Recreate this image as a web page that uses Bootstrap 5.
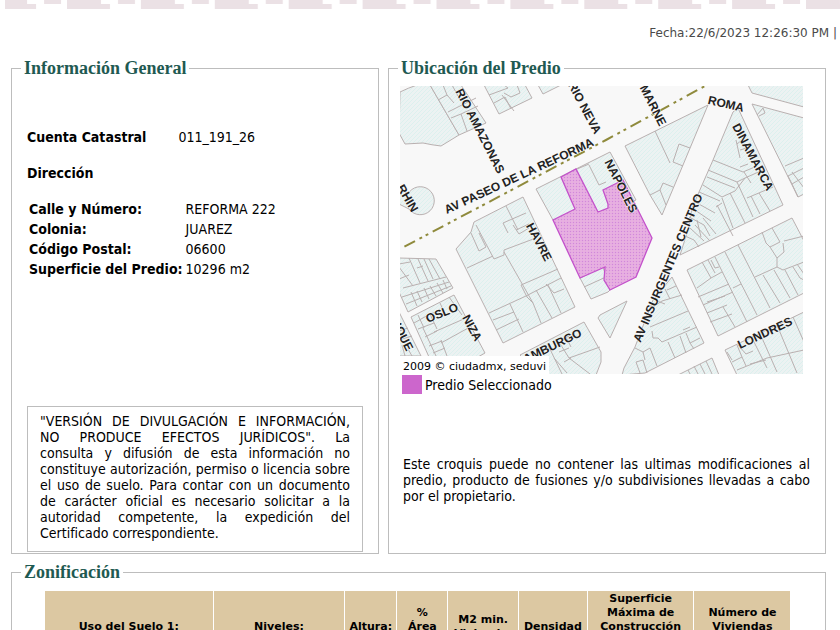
<!DOCTYPE html>
<html lang="es">
<head>
<meta charset="utf-8">
<meta name="viewport" content="width=device-width, initial-scale=1">
<title>Información del Predio</title>
<link href="https://cdn.jsdelivr.net/npm/bootstrap@5.3.0/dist/css/bootstrap.min.css" rel="stylesheet">
<style>
  body { font-family: "DejaVu Sans Condensed", "DejaVu Sans", sans-serif; font-size: 14px; line-height: 16px; color: #000; background: #fff; }
  .greca { height: 10px; padding-left: 5px; }
  .fecha { font-family: "DejaVu Sans", sans-serif; font-size: 12px; color: #4a4a4a; padding: 15px 3px 17px; }
  .pagina { padding: 0 14px 0 11px; }
  .paneles { display: grid; grid-template-columns: 368fr 438fr; gap: 9px; }
  .panel { border: 1px solid #bdbdbd; padding: 0 11px; margin: 0; }
  .panel legend { font-family: "Liberation Serif", serif; font-weight: 700; font-size: 18px; line-height: 20px; color: #1f5a52; padding: 0 3px; margin: 0 0 0 -2px; }
  .general { min-height: 475px; padding: 0 4px 1px; }
  .datos { margin-top: 18px; }
  .datos td, .datos th { padding: 2px 1px 2px 2px; line-height: 16px; }
  .aviso { border: 1px solid #bdbdbd; padding: 6px 12px 10px; text-align: justify; }
  .cuenta { margin-top: 51px; gap: 32px; }
  .domicilio { margin-top: 20px; }
  .mapa { width: 403px; max-width: 100%; height: auto; margin-top: 8px; }
  .leyenda { margin: 1px 0 0 2px; gap: 3px; }
  .muestra { width: 20px; height: 19px; background: #cc66cc; }
  .croquis { text-align: justify; margin: 62px 4px 0 3px; }
  .zona { margin-top: 8px; }
  .zona-tabla { font-family: "DejaVu Sans", sans-serif; font-size: 11px; line-height: 14px; border-collapse: separate; border-spacing: 1px 0; width: 94.5%; margin: 9px 0 20px 21px; table-layout: fixed; }
  .zona-tabla th { background: #dcc8a2; padding: 0 1px 1px; text-align: center; vertical-align: middle; height: 73px; }
  .calle { font-family: "Liberation Sans", Arial, sans-serif; font-size: 12px; fill: #222; stroke: #f8f8f8; stroke-width: 1px; paint-order: stroke; font-weight: 700; }
  .autor { font-family: "DejaVu Sans", sans-serif; font-size: 11px; }
</style>
<script src="https://cdn.jsdelivr.net/npm/bootstrap@5.3.0/dist/js/bootstrap.bundle.min.js"></script>
</head>
<body>
<header>
  <div class="greca">
    <svg class="d-block" width="100%" height="10" aria-hidden="true">
      <defs><pattern id="greca" x="62" width="73.9" height="10" patternUnits="userSpaceOnUse">
        <path fill="#ebe1e5" d="M0 0h34v4h9v5H0zM51 0h17v4H51z"/>
      </pattern></defs>
      <rect width="100%" height="10" fill="url(#greca)"/>
    </svg>
  </div>
  <div class="fecha text-end">Fecha:22/6/2023 12:26:30 PM |</div>
</header>
<main class="pagina">
  <div class="paneles">
    <fieldset class="panel">
      <legend class="float-none w-auto">Información General</legend>
      <div class="general d-flex flex-column">
        <div class="cuenta d-flex"><strong>Cuenta Catastral</strong><span>011_191_26</span></div>
        <strong class="domicilio d-block">Dirección</strong>
        <table class="datos align-self-start">
          <tr><th scope="row">Calle y Número:</th><td>REFORMA 222</td></tr>
          <tr><th scope="row">Colonia:</th><td>JUAREZ</td></tr>
          <tr><th scope="row">Código Postal:</th><td>06600</td></tr>
          <tr><th scope="row">Superficie del Predio:</th><td>10296 m2</td></tr>
        </table>
        <div class="aviso mt-auto">"VERSIÓN DE DIVULGACIÓN E INFORMACIÓN, NO&nbsp;PRODUCE EFECTOS JURÍDICOS". La consulta&nbsp;y&nbsp;difusión de esta información no constituye autorización, permiso o licencia sobre el&nbsp;uso&nbsp;de suelo. Para contar con un documento de&nbsp;carácter oficial es necesario solicitar a la autoridad competente, la expedición del Certificado correspondiente.</div>
      </div>
    </fieldset>
    <fieldset class="panel">
      <legend class="float-none w-auto">Ubicación del Predio</legend>
      <svg class="mapa d-block" viewBox="400 86 403 288" role="img" aria-label="Croquis de ubicación del predio">
        <defs>
          <pattern id="trama" width="4" height="4" patternUnits="userSpaceOnUse"><rect width="4" height="4" fill="#ecf2f2"/><path d="M-1 1l2-2M0 4l4-4M3 5l2-2" stroke="#dcf0ee" stroke-width="1"/></pattern>
          <pattern id="rosa" width="3" height="3" patternUnits="userSpaceOnUse"><rect width="3" height="3" fill="#e6a9e3"/><path d="M0 0h1v1h-1z" fill="#cf8cd6"/><path d="M1 2h2" stroke="#e9b9dc"/></pattern>
        </defs>
        <rect x="400" y="86" width="403" height="288" fill="#f8f8f8"/>
        <g fill="url(#trama)" stroke="#b9b0b0" stroke-width="1" stroke-linejoin="round">
          <path d="M400 92Q408 88 417 85H430L459 135 441 146Q432 145 423 143L405 144 399 133z"/>
          <path d="M430 85H461L486 123 459 135z"/>
          <path d="M484 85L499 114 532 98 525 85z"/>
          <path d="M538 85L543 94 561 85z"/>
          <path d="M399 187L408 194A14 14 0 1 1 409 209L399 204z"/>
          <path d="M536 189L610 152 636 200 602 214 553 220z"/>
          <path d="M580 278L603 267 610 290 608 292 591 299z"/>
          <path d="M474 222L523 197 575 307 503 343 456 249 471 232z"/>
          <path d="M399 258L436 259 453 288 408 312 399 292z"/>
          <path d="M411 317L454 295 485 353 478 357H429z"/>
          <path d="M399 312L421 356H399z"/>
          <path d="M520 355L584 322 601 352 601 362 596 375H540z"/>
          <path d="M598 318L600 315 627 301 610 338z"/>
          <path d="M672 277L704 343 645 373 622 375 624 368 635 347 643 326 653 300z"/>
          <path d="M687 270L792 218 804 241V293L718 336z"/>
          <path d="M725 350L804 312V375H737z"/>
          <path d="M678 375L712 358 719 375z"/>
          <path d="M733 112L738 108 783 205 680 255 688 230 692 208 713 160z"/>
          <path d="M625 146L708 105 683 165 662 215 650 195z"/>
          <path d="M748 85L752 93 804 107V85z"/>
          <path d="M752 104L804 118V194L798 197z"/>
        </g>
        <g fill="none" stroke="#b9b0b0" stroke-width="1">
          <path d="M448 112L476 98M451 118L461 114 467 131M461 114L478 106M438 100L447 95 443 85M447 95L454 103M452 85L458 96"/>
          <path d="M489 95L508 88 504 85M494 103L505 97M502 95L514 111M504 93L511 97 520 93 517 85M505 97L511 109"/>
          <path d="M589 165L599 185 606 182M577 169L589 164"/>
          <path d="M584 287L606 277M506 206L518 230M503 223L526 213M503 223L508 233M516 230L529 224M476 225L494 259 504 255 504 250 536 238M504 252L533 303 541 323M467 268L493 256M489 313L526 296 561 278M521 285L558 269M521 285L527 297M510 304L523 332M493 320L514 312M496 330L519 319M536 290L552 318M548 285L561 313M554 293L564 289M546 284L554 293M471 233L479 251 486 247 479 233M513 225L519 234 529 228M533 303L527 297"/>
          <path d="M409 258L420 283M418 259L428 281M424 259L433 279M429 259L440 279M399 267L413 286M399 279L409 275M403 288L446 277M402 297L449 282M406 304L451 286M411 292L417 306M417 291L422 302M424 288L429 299M430 286L436 296M437 283L443 293M443 280L447 289M417 268L423 266M410 262L399 264"/>
          <path d="M434 332L466 318M441 343L470 327M437 329L430 314M418 315L424 328M414 323L430 314 436 312M418 329L434 323M425 337L437 331M429 346L442 341M433 353L445 348M449 297L462 315M440 303L446 316M441 340L447 356M423 328L436 356M466 318L471 327M399 340L412 336M402 345L405 356M408 349L412 356M399 331L408 328"/>
          <path d="M548 345L562 374M559 342L569 358 600 347M563 339L575 333M566 337L571 347M569 358L590 374M554 358L567 373M559 352L569 348M571 358L564 362"/>
          <path d="M665 289L670 299M667 290L676 286M662 301L682 295M653 307L662 301M650 327L688 311M652 331L653 338 658 338 662 342 697 327M668 342L675 358M680 336L686 353M686 333L690 343 700 338M683 330L690 327M690 343L694 349M635 348L643 352 650 348 657 366M643 352L645 360M636 362L643 360 647 373M636 362L640 373M657 301L665 304"/>
          <path d="M715 257L747 322M725 252L757 315M738 245L770 308M763 275L780 303M774 270L790 298M702 262L711 278 722 272M708 260L715 273M697 288L711 278M711 260L715 268 719 267M698 297L729 284M703 305L733 292M707 313L727 305M710 322L732 314M707 302L725 296M723 307L735 327M755 277L777 267M770 247L777 258 777 267 783 270 804 262M762 232L766 243 770 247 780 242 772 228M783 243L784 252 777 258M784 241L804 236M785 270L798 295M793 267L800 278 804 280M797 264L804 274M733 288L741 284"/>
          <path d="M732 362L742 357 746 366M737 370L767 358 804 350M752 338L767 368M762 338L777 372M777 325L797 373M793 317L804 342M738 345L746 354 753 351M742 357L737 345M732 360L727 352M750 364L766 360M688 370L690 374M694 366L698 374M700 364L705 374M706 361L712 374"/>
          <path d="M713 160L743 172M708 170L737 182M707 177L735 188M703 185L722 197M699 192L720 201M697 203L715 213M692 208L711 221M689 217L704 225M722 197L735 191 745 178 737 182M722 198L733 228M730 193L745 223M737 182L753 217M747 198L773 187M751 196L760 214M759 193L770 211M744 172L751 183M717 205L733 236M716 207L722 203M704 225L710 236M697 220L701 237M685 236L694 240 699 247M690 228L704 241M695 225L710 241M736 140L740 158M742 140L737 144M740 150L747 148M740 167L748 164M743 172L757 166M745 178L763 170M703 218L716 234"/>
          <path d="M655 131L670 163M690 148L679 144 673 162 683 166M650 195L660 190 666 205M660 190L663 183 673 187M785 166L804 158M788 176L804 168M792 184L804 177M788 176L792 184 798 197M792 172L804 188M763 108L765 113 759 116M757 115L763 108"/>
        </g>
        <path fill="url(#rosa)" stroke="#c352cb" stroke-width="1.3" d="M561 177L576 169 598 212 608 208 608 204 603 190 623 180 648 230 652 238 636 277 610 290 604 280 605 267 580 278 553 220 575 209z"/>
        <path fill="none" stroke="#8f8a3c" stroke-width="2" stroke-dasharray="12 5 3 4 3 5" stroke-dashoffset="27" d="M400 249L606 140 705 86"/>
        <g class="calle">
          <text text-anchor="middle" transform="translate(480 131) rotate(63)" dy="4">RIO AMAZONAS</text>
          <text text-anchor="end" transform="translate(598 133) rotate(62)" dy="4">RIO NEVA</text>
          <text text-anchor="end" transform="translate(663 125) rotate(63)" dy="4">MARNE</text>
          <text text-anchor="middle" transform="translate(519 176) rotate(-25)" dy="4">AV PASEO DE LA REFORMA</text>
          <text text-anchor="end" transform="translate(415 211) rotate(60)" dy="4">RHIN</text>
          <text text-anchor="middle" transform="translate(539 242) rotate(62)" dy="4">HAVRE</text>
          <text text-anchor="middle" transform="translate(621 186) rotate(63)" dy="4">NAPOLES</text>
          <text text-anchor="middle" transform="translate(726 104) rotate(13)" dy="4">ROMA</text>
          <text text-anchor="middle" transform="translate(753 157) rotate(62)" dy="4">DINAMARCA</text>
          <text text-anchor="middle" transform="translate(668 268) rotate(-67)" dy="4">AV INSURGENTES CENTRO</text>
          <text text-anchor="middle" transform="translate(765 333) rotate(-25)" dy="4">LONDRES</text>
          <text text-anchor="end" transform="translate(581 332) rotate(-26)" dy="4">HAMBURGO</text>
          <text text-anchor="middle" transform="translate(442 313) rotate(-22)" dy="4">OSLO</text>
          <text text-anchor="middle" transform="translate(472 328) rotate(62)" dy="4">NIZA</text>
          <text text-anchor="end" transform="translate(410 350) rotate(63)" dy="4">DUQUE</text>
        </g>
        <rect x="400" y="356" width="149" height="18" fill="#fff"/>
        <text class="autor" x="403" y="370">2009 © ciudadmx, seduvi</text>
      </svg>
      <div class="leyenda d-flex align-items-center"><span class="muestra"></span><span>Predio Seleccionado</span></div>
      <p class="croquis">Este croquis puede no contener las ultimas modificaciones al predio, producto de fusiones y/o subdivisiones llevadas a cabo por el propietario.</p>
    </fieldset>
  </div>
  <fieldset class="panel zona">
    <legend class="float-none w-auto">Zonificación</legend>
    <table class="zona-tabla">
      <colgroup><col style="width:22.7%"><col style="width:17.7%"><col style="width:6.9%"><col style="width:6.8%"><col style="width:9.4%"><col style="width:9.2%"><col style="width:14.3%"><col></colgroup>
      <thead><tr><th>Uso del Suelo 1:</th><th>Niveles:</th><th>Altura:</th><th>%<br>Área Libre:</th><th>M2 min. Vivienda:</th><th>Densidad</th><th>Superficie Máxima de Construcción (Sujeta a restricciones*)</th><th>Número de Viviendas Permitidas</th></tr></thead>
    </table>
  </fieldset>
</main>
</body>
</html>
